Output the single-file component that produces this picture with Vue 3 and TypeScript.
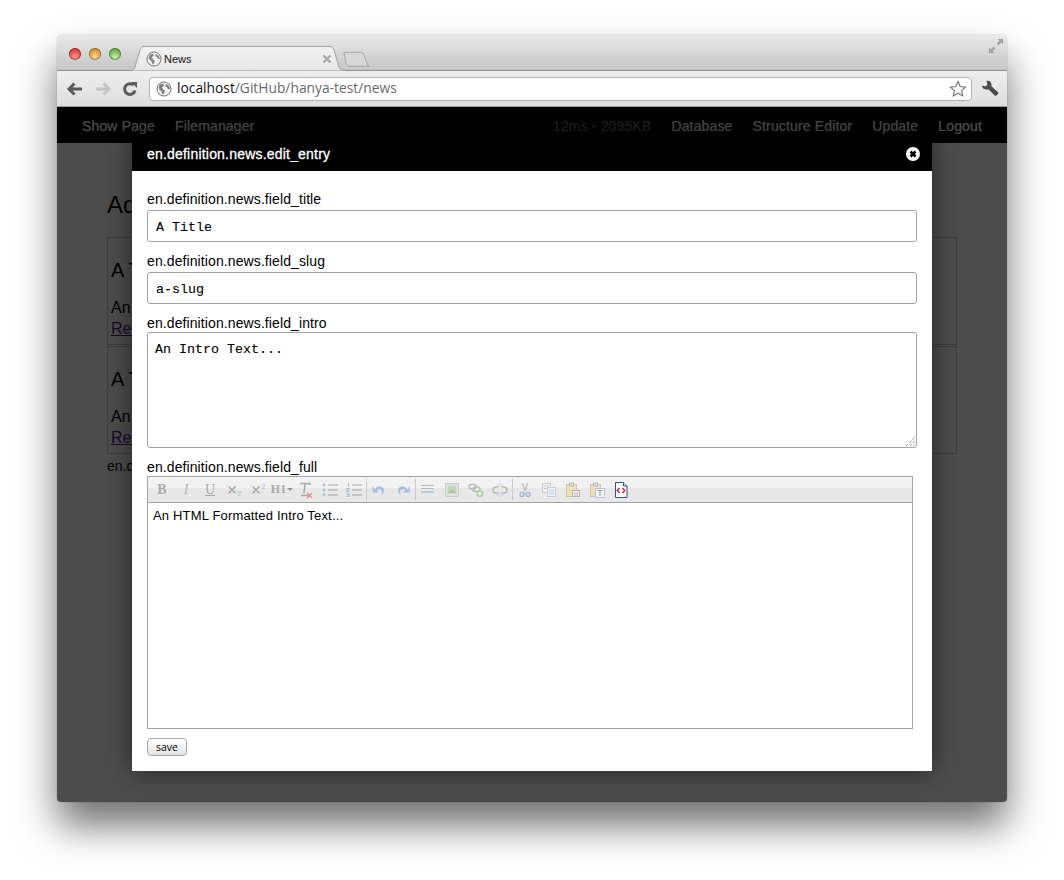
<script setup lang="ts">
const navLeft: string[] = ['Show Page', 'Filemanager']
const navRight: string[] = ['Database', 'Structure Editor', 'Update', 'Logout']
const cards = [{ id: 1 }, { id: 2 }]
</script>

<template>
  <div class="stage">
    <div class="window">
      <div class="titlebar">
        <div class="lights">
          <span class="light red"></span>
          <span class="light amber"></span>
          <span class="light green"></span>
        </div>
        <div class="tab">
          <svg class="tab-shape" width="216" height="25" viewBox="0 0 216 25">
            <defs>
              <linearGradient id="tabFill" x1="0" y1="0" x2="0" y2="1">
                <stop offset="0" stop-color="#f3f3f3" />
                <stop offset="1" stop-color="#e6e6e6" />
              </linearGradient>
            </defs>
            <path d="M0 24.500c3 0 4-1 5-3.500L10 4c.7-2 2-3.500 4-3.500h186c2 0 3 1.500 4 3.500l5 17c1 2.500 3 3.500 7 3.500" fill="url(#tabFill)" stroke="#a0a0a0" />
          </svg>
          <svg class="globe" width="16" height="16" viewBox="0 0 16 16">
            <circle cx="8" cy="8" r="7" fill="#f4f4f4" stroke="#777" stroke-width="1" />
            <path d="M4 3.500l3-1 1 2-2 1.500 1 2.500 2 1-1 3-1.500 1-1-3-2-2-1-2z" fill="#8a8a8a" />
            <path d="M10 3l3 2 1 3-2 0-1-2-2-1z" fill="#8a8a8a" />
          </svg>
          <span class="tab-title">News</span>
          <svg class="tab-x" width="10" height="10" viewBox="0 0 10 10">
            <path d="M1.500 1.500l7 7M8.500 1.500l-7 7" stroke="#a8a8a8" stroke-width="2.200" />
          </svg>
        </div>
        <svg class="newtab" width="27" height="17" viewBox="0 0 28 18">
          <path d="M1 1.500h17c2 0 3 1 4 3l3 8c.5 2 1.500 3 2.500 3.500H7c-2 0-3-1-4-3L.8 3c-.3-1 0-1.500.2-1.500z" fill="#d8d8d8" stroke="#a4a4a4" />
        </svg>
        <svg class="fullscreen" width="16" height="16" viewBox="0 0 16 16">
          <path d="M9.500 1H15v5.500l-1.900-1.900-2.800 2.800-1.700-1.700 2.800-2.800zM6.500 15H1V9.500l1.900 1.900 2.800-2.800 1.700 1.700-2.800 2.800z" fill="#a2a2a2" />
        </svg>
      </div>

      <div class="toolbar">
        <svg class="tool" width="18" height="16" viewBox="0 0 18 16">
          <path d="M16 8H4M8.500 2.500L3 8l5.500 5.500" fill="none" stroke="#5b5b5b" stroke-width="3" />
        </svg>
        <svg class="tool" width="18" height="16" viewBox="0 0 18 16">
          <path d="M2 8h12M9.500 2.500L15 8l-5.500 5.500" fill="none" stroke="#c4c4c4" stroke-width="3" />
        </svg>
        <svg class="tool" width="16" height="16" viewBox="0 0 16 16">
          <path d="M13 9.500A5.300 5.300 0 1 1 11.500 4.200" fill="none" stroke="#5b5b5b" stroke-width="3" />
          <path d="M9 1h6v6z" fill="#5b5b5b" />
        </svg>
        <div class="omnibox">
          <svg class="globe" width="16" height="16" viewBox="0 0 16 16">
            <circle cx="8" cy="8" r="7" fill="#f0f0f0" stroke="#6f6f6f" stroke-width="1" />
            <path d="M4 3.500l3-1 1 2-2 1.500 1 2.500 2 1-1 3-1.500 1-1-3-2-2-1-2z" fill="#7d7d7d" />
            <path d="M10 3l3 2 1 3-2 0-1-2-2-1z" fill="#7d7d7d" />
          </svg>
          <span class="url"><b>localhost</b>/GitHub/hanya-test/news</span>
          <svg class="star" width="18" height="18" viewBox="0 0 18 18">
            <path d="M9 1.500l2.300 5 5.200.6-3.900 3.500 1.100 5.300L9 13.200l-4.700 2.700 1.100-5.300L1.500 7.100l5.200-.6z" fill="#fff" stroke="#777" stroke-width="1.200" />
          </svg>
        </div>
        <svg class="wrench" width="18" height="18" viewBox="0 0 18 18">
          <path d="M1 5.500L4.500 6.500 6.500 4.500 5.500 1C8 .2 10.500 2 10.500 4.500c0 .6-.1 1-.3 1.500l7 6.500c.8 1-2 4-3.200 3.200L7.500 9.200C4.500 10.300 1 8.500 1 5.500z" fill="#4a4a4a" />
        </svg>
      </div>

      <div class="page">
        <nav class="navbar">
          <a v-for="item in navLeft" :key="item" class="nav-link">{{ item }}</a>
          <span class="nav-stat">12ms - 2095KB</span>
          <a v-for="item in navRight" :key="item" class="nav-link">{{ item }}</a>
        </nav>
        <main class="content">
          <h1 class="page-title">Add News</h1>
          <section v-for="c in cards" :key="c.id" class="card">
            <h2 class="card-title">A Title</h2>
            <p class="card-text">An Intro Text...</p>
            <a class="card-link">Read More</a>
          </section>
          <div class="after-cards">en.definition.news.add</div>
        </main>

        <div class="overlay"></div>

        <div class="modal">
          <header class="modal-head">
            <span class="modal-title">en.definition.news.edit_entry</span>
            <svg class="modal-close" width="14" height="14" viewBox="0 0 14 14">
              <circle cx="7" cy="7" r="7" fill="#fff" />
              <path d="M4.500 4.500l5 5M9.500 4.500l-5 5" stroke="#000" stroke-width="2.600" />
            </svg>
          </header>
          <form class="modal-body">
            <label class="field-label">en.definition.news.field_title</label>
            <div class="input">A Title</div>
            <label class="field-label">en.definition.news.field_slug</label>
            <div class="input">a-slug</div>
            <label class="field-label tight">en.definition.news.field_intro</label>
            <div class="textarea">
              An Intro Text...
              <svg class="grip" width="9" height="9" viewBox="0 0 9 9">
                <path d="M0 9l9-9M4 9l5-5M7.500 9L9 7.500" stroke="#666" stroke-width="1" stroke-dasharray="1 1" />
              </svg>
            </div>
            <label class="field-label full">en.definition.news.field_full</label>
            <div class="editor">
              <div class="editor-bar">
                <span class="tb"><b class="g-b">B</b></span>
                <span class="tb"><i class="g-i">I</i></span>
                <span class="tb"><u class="g-u">U</u></span>
                <span class="tb"><span class="g-x">×<sub>2</sub></span></span>
                <span class="tb"><span class="g-x">×<sup>2</sup></span></span>
                <span class="tb"><span class="g-h">H1</span><span class="caret"></span></span>
                <span class="tb">
                  <svg width="18" height="18" viewBox="0 0 18 18">
                    <path d="M3 2.500h10v1.500M8 2.500l-1 10M4 14.500h8" fill="none" stroke="#aaa" stroke-width="1.500" />
                    <path d="M10 12l5 5M15 12l-5 5" stroke="#e89090" stroke-width="1.600" />
                  </svg>
                </span>
                <span class="tb">
                  <svg width="18" height="18" viewBox="0 0 18 18">
                    <path d="M7 4h10M7 9h10M7 14h10" stroke="#a6a6a6" stroke-width="1" />
                    <circle cx="3" cy="4" r="1.400" fill="#a9c0dc" />
                    <circle cx="3" cy="9" r="1.400" fill="#a9c0dc" />
                    <circle cx="3" cy="14" r="1.400" fill="#a9c0dc" />
                  </svg>
                </span>
                <span class="tb">
                  <svg width="18" height="18" viewBox="0 0 18 18">
                    <path d="M7 4h10M7 9h10M7 14h10" stroke="#a6a6a6" stroke-width="1" />
                    <path d="M2.500 2.500h1v3M1.500 7.500h2.500v1.500h-2.500v1.500h2.500M1.500 12.500h2.500v1.500h-2M1.500 15.500h2.500v-1.500" fill="none" stroke="#a9c0dc" stroke-width="1" />
                  </svg>
                </span>
                <span class="sep"></span>
                <span class="tb">
                  <svg width="16" height="16" viewBox="0 0 16 16">
                    <path d="M4 8c1-5 8-5 9 0 .3 2-1 4-3 6 1-2.500 1.500-5-.5-6.500C8 6.500 6.500 7 6 8.500L8 10.500H1.500V4z" fill="#a8c0de" />
                  </svg>
                </span>
                <span class="tb">
                  <svg width="16" height="16" viewBox="0 0 16 16">
                    <path d="M12 8c-1-5-8-5-9 0-.3 2 1 4 3 6-1-2.500-1.500-5 .5-6.500C8 6.500 9.500 7 10 8.500L8 10.500h6.500V4z" fill="#a8c0de" />
                  </svg>
                </span>
                <span class="sep"></span>
                <span class="tb faded">
                  <svg width="16" height="16" viewBox="0 0 16 16">
                    <path d="M1 3.500h13M1 6.500h13" stroke="#a9a9a9" stroke-width="1" />
                    <path d="M1 10h13" stroke="#a9c0dc" stroke-width="2" />
                  </svg>
                </span>
                <span class="tb faded">
                  <svg width="16" height="16" viewBox="0 0 16 16">
                    <rect x="1.500" y="1.500" width="13" height="13" fill="#dde5dc" stroke="#b8c4cc" />
                    <rect x="3.500" y="3.500" width="9" height="8" fill="#b9d2ad" />
                    <path d="M4 11l3-4 2 2 1-1 2 3z" fill="#9cbc8f" />
                  </svg>
                </span>
                <span class="tb faded">
                  <svg width="16" height="16" viewBox="0 0 16 16">
                    <rect x="1" y="2.500" width="7" height="4.500" rx="2.200" fill="none" stroke="#adadad" stroke-width="1.600" />
                    <rect x="5" y="5" width="7" height="4.500" rx="2.200" fill="none" stroke="#adadad" stroke-width="1.600" />
                    <circle cx="12" cy="11.500" r="3.500" fill="#a7cc9b" />
                    <path d="M12 9.500v4M10 11.500h4" stroke="#fff" stroke-width="1" />
                  </svg>
                </span>
                <span class="tb faded">
                  <svg width="16" height="16" viewBox="0 0 16 16">
                    <path d="M6.500 5H4a3 3 0 0 0 0 6h2.500M9.500 5H12a3 3 0 0 1 0 6H9.500" fill="none" stroke="#adadad" stroke-width="1.600" />
                    <path d="M8 1v4M8 11v4M5 2l1.500 3M11 2L9.500 5M5 14l1.500-3M11 14l-1.500-3" stroke="#b6cbe4" stroke-width="1" />
                  </svg>
                </span>
                <span class="sep"></span>
                <span class="tb faded">
                  <svg width="16" height="16" viewBox="0 0 16 16">
                    <path d="M5.500 1l2.500 8M10.500 1L8 9" stroke="#b5b5b5" stroke-width="1.500" />
                    <circle cx="5" cy="12.500" r="2" fill="none" stroke="#93a9c9" stroke-width="1.500" />
                    <circle cx="11" cy="12.500" r="2" fill="none" stroke="#93a9c9" stroke-width="1.500" />
                  </svg>
                </span>
                <span class="tb faded">
                  <svg width="16" height="16" viewBox="0 0 16 16">
                    <rect x="1.500" y="1.500" width="8" height="9" fill="#f3f3f3" stroke="#c4c4c4" />
                    <path d="M3 4h5M3 6.500h4" stroke="#e3b0a8" />
                    <rect x="6.500" y="5.500" width="8" height="9" fill="#f3f6fa" stroke="#b6c6dc" />
                    <path d="M8 8h5M8 10h5M8 12h5" stroke="#b6c6dc" />
                  </svg>
                </span>
                <span class="tb faded">
                  <svg width="16" height="16" viewBox="0 0 16 16">
                    <rect x="1.500" y="2.500" width="10" height="12" fill="#eddcaa" stroke="#cdb98c" />
                    <rect x="4.500" y="1" width="4" height="3" fill="#d8d8d8" stroke="#aaa" />
                    <rect x="7.500" y="8.500" width="7" height="6" fill="#f3f3f3" stroke="#a8a8a8" />
                    <path d="M9 11h4M9 13h4" stroke="#aaa" />
                  </svg>
                </span>
                <span class="tb faded">
                  <svg width="16" height="16" viewBox="0 0 16 16">
                    <rect x="1.500" y="2.500" width="10" height="12" fill="#eddcaa" stroke="#cdb98c" />
                    <rect x="4.500" y="1" width="4" height="3" fill="#d8d8d8" stroke="#aaa" />
                    <rect x="6.500" y="6.500" width="9" height="9" fill="#f8fafd" stroke="#a6bad6" />
                    <path d="M8.500 8.500h5M11 8.500v5.500" stroke="#888" stroke-width="1.200" />
                  </svg>
                </span>
                <span class="tb">
                  <svg width="16" height="16" viewBox="0 0 16 16">
                    <path d="M2.500 .5h8l3.500 3.500v11.500H2.500z" fill="#fff" stroke="#35507a" />
                    <path d="M10.500 .5v3.500H14" fill="#dde5f0" stroke="#35507a" />
                    <path d="M6.500 6L4.200 8.500 6.500 11M9.500 6l2.300 2.500L9.500 11" fill="none" stroke="#d5211c" stroke-width="1.400" />
                  </svg>
                </span>
              </div>
              <div class="editor-text">An HTML Formatted Intro Text...</div>
            </div>
            <button type="button" class="save">save</button>
          </form>
        </div>
      </div>
    </div>
  </div>
</template>

<style>
html, body { margin: 0; background: #fff; }
</style>

<style scoped>
.stage {
  width: 1064px;
  height: 880px;
  padding: 35px 57px 0;
  box-sizing: border-box;
  background: #fff;
  overflow: hidden;
  font-family: "Liberation Sans", Arial, sans-serif;
}
.window {
  width: 950px;
  height: 767px;
  border-radius: 5px 5px 4px 4px;
  display: flex;
  flex-direction: column;
  overflow: hidden;
  box-shadow: 0 0 1px 0 rgba(0, 0, 0, .5);
  position: relative;
}
.stage::before {
  content: "";
  position: absolute;
  left: 57px;
  top: 35px;
  width: 950px;
  height: 767px;
  box-shadow: 0 24px 38px rgba(0, 0, 0, .55);
  border-radius: 5px;
}
.titlebar {
  height: 36px;
  flex: none;
  display: flex;
  align-items: flex-end;
  background: linear-gradient(#e9e9e9, #c6c6c6);
  border-bottom: 1px solid #8f8f8f;
  box-sizing: border-box;
  position: relative;
}
.lights {
  display: flex;
  gap: 8px;
  padding: 0 0 10px 12px;
}
.light {
  width: 12px;
  height: 12px;
  border-radius: 50%;
  box-shadow: inset 0 0 0 1px rgba(0, 0, 0, .3);
}
.red { background: radial-gradient(circle at 50% 75%, #ff9e9a, #d83a3a 70%); }
.amber { background: radial-gradient(circle at 50% 75%, #ffdc95, #d2932c 70%); }
.green { background: radial-gradient(circle at 50% 75%, #c3eda8, #6bab4a 70%); }
.tab {
  position: relative;
  margin-left: 9px;
  margin-bottom: -1px;
  width: 216px;
  height: 25px;
  box-sizing: border-box;
  display: flex;
  align-items: center;
  padding: 0 14px 0 16px;
  flex: none;
}
.tab-shape {
  position: absolute;
  left: 0;
  top: 0;
}
.tab .globe, .tab-title, .tab-x { position: relative; }
.tab-title {
  margin-left: 2px;
  font-size: 11px;
  color: #111;
  flex: 1;
}
.newtab { margin: 0 0 2px -3px; }
.fullscreen {
  position: absolute;
  right: 3px;
  top: 3px;
}
.toolbar {
  height: 36px;
  flex: none;
  box-sizing: border-box;
  background: linear-gradient(#eeeeee, #dedede);
  border-bottom: 1px solid #9a9a9a;
  display: flex;
  align-items: center;
  padding: 0 0 0 9px;
}
.tool { margin-right: 10px; }
.omnibox {
  margin-left: 1px;
  width: 823px;
  height: 24px;
  box-sizing: border-box;
  background: #fff;
  border: 1px solid #b4b4b4;
  border-radius: 4px;
  display: flex;
  align-items: center;
  padding: 0 4px 0 6px;
}
.url {
  margin-left: 5px;
  padding-bottom: 2px;
  flex: 1;
  font-family: "Open Sans", "Liberation Sans", sans-serif;
  font-size: 13.800px;
  color: #6a6a6a;
}
.url b { font-weight: 400; color: #111; }
.wrench { margin-left: 9px; }
.page {
  flex: 1;
  position: relative;
  background: #fff;
  overflow: hidden;
  color: #000;
}
.navbar {
  height: 36px;
  background: #000;
  display: flex;
  align-items: center;
  padding: 2px 25px 0;
  box-sizing: border-box;
  gap: 20px;
  font-size: 14px;
  letter-spacing: .15px;
}
.nav-link { color: #f4f4f4; text-shadow: 0 0 1px rgba(255, 255, 255, .6); }
.nav-stat {
  margin-left: auto;
  color: #777;
}
.content { padding: 48px 50px 0; }
.page-title {
  margin: 0 0 18px;
  font-size: 24px;
  line-height: 28px;
  font-weight: 400;
}
.card {
  border: 1px solid #ccc;
  height: 108px;
  box-sizing: border-box;
  padding: 20px 3px 0;
  margin-bottom: 1px;
}
.card-title {
  margin: 0 0 15px;
  font-size: 20px;
  line-height: 24px;
  font-weight: 400;
}
.card-text { margin: 0; font-size: 16px; line-height: 21px; }
.card-link { color: #551a8b; text-decoration: underline; font-size: 16px; line-height: 21px; display: block; }
.after-cards { font-size: 14px; line-height: 16px; margin-top: 4px; }
.overlay {
  position: absolute;
  inset: 0;
  background: rgba(0, 0, 0, .7);
}
.modal {
  position: absolute;
  left: 75px;
  top: 30px;
  width: 800px;
  height: 634px;
  background: #fff;
  box-shadow: 0 0 25px rgba(0, 0, 0, .5);
}
.modal-head {
  height: 34px;
  background: #000;
  display: flex;
  align-items: center;
  justify-content: space-between;
  padding: 0 12px 0 15px;
}
.modal-title {
  color: #fff;
  font-size: 14px;
  letter-spacing: .2px;
  -webkit-text-stroke: .3px #fff;
}
.modal-body {
  padding: 20px 15px 0;
  display: flex;
  flex-direction: column;
  align-items: flex-start;
}
.field-label {
  font-size: 14px;
  letter-spacing: .1px;
  line-height: 16px;
  height: 19px;
  margin-top: 0;
}
.field-label.tight { height: 12px; }
.field-label.full { margin-top: 11px; height: 17px; }
.input {
  width: 770px;
  height: 32px;
  box-sizing: border-box;
  border: 1px solid #a3a3a3;
  border-radius: 3px;
  padding: 2px 8px 0;
  font-family: "Liberation Mono", "Courier New", monospace;
  font-size: 13.330px;
  line-height: 30px;
  color: #000;
  margin-bottom: 11px;
  white-space: pre;
  -webkit-text-stroke: .1px #000;
}
.textarea {
  position: relative;
  width: 770px;
  height: 116px;
  margin-top: 5px;
  box-sizing: border-box;
  border: 1px solid #a3a3a3;
  border-radius: 3px;
  padding: 9px 7px;
  font-family: "Liberation Mono", "Courier New", monospace;
  font-size: 13.330px;
  line-height: 15px;
  -webkit-text-stroke: .1px #000;
}
.grip { position: absolute; right: 1px; bottom: 1px; }
.editor {
  width: 766px;
  height: 253px;
  box-sizing: border-box;
  border: 1px solid #a3a3a3;
  display: flex;
  flex-direction: column;
}
.editor-bar {
  height: 26px;
  flex: none;
  box-sizing: border-box;
  border-bottom: 1px solid #a3a3a3;
  background: linear-gradient(#f2f2f2 0, #f2f2f2 45%, #e8e8e8 45%, #e8e8e8 100%);
  display: flex;
  align-items: center;
  padding-left: 2px;
  color: #aaa;
}
.tb {
  width: 24px;
  height: 22px;
  display: flex;
  align-items: center;
  justify-content: center;
  font-family: "Liberation Serif", serif;
  font-size: 13px;
  flex: none;
}
.faded { opacity: .75; }
.g-b { color: #aaa; font-size: 14px; }
.g-i { color: #b5b5b5; font-size: 14px; }
.g-u { color: #aaa; font-size: 14px; }
.g-x { font-family: "Liberation Sans", sans-serif; font-size: 18px; line-height: 18px; color: #a5a5a5; display: flex; align-items: center; }
.g-x sub { font-size: 7px; line-height: 1; color: #a9c0dc; margin-top: 7px; }
.g-x sup { font-size: 7px; line-height: 1; color: #a9c0dc; margin-top: -7px; }
.g-h { font-weight: 700; color: #aaa; font-size: 12px; }
.caret {
  width: 0;
  height: 0;
  border: 3px solid transparent;
  border-top-color: #999;
  margin: 3px 0 0 1px;
}
.sep {
  width: 1px;
  height: 21px;
  background: #c9c9c9;
  flex: none;
}
.editor-text {
  padding: 5px 5px;
  font-size: 13px;
  letter-spacing: .17px;
  line-height: 16px;
}
.save {
  margin-top: 9px;
  width: 40px;
  height: 18px;
  padding: 0;
  border: 1px solid #a8a8a8;
  border-radius: 4px;
  background: linear-gradient(#fff, #e4e4e4);
  font-family: "Open Sans", "Liberation Sans", sans-serif;
  font-size: 10.500px;
  color: #000;
}
</style>
